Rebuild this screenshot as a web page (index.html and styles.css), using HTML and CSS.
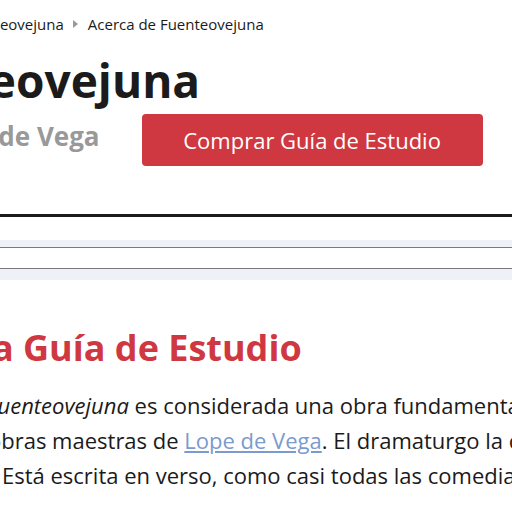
FILE: index.html
```html
<!DOCTYPE html>
<html lang="es">
<head>
<meta charset="utf-8">
<title>Acerca de Fuenteovejuna</title>
<link rel="stylesheet" href="styles.css">
</head>
<body>
<div class="page">
  <nav class="crumbs">
    <span class="crumb first">Fuenteovejuna</span>
    <span class="sep"></span>
    <span class="crumb">Acerca de Fuenteovejuna</span>
  </nav>
  <header class="hero">
    <h1 class="title">Fuenteovejuna</h1>
    <div class="hero-row">
      <p class="author">Lope de Vega</p>
      <a class="buy" href="#">Comprar Guía de Estudio</a>
    </div>
  </header>
  <hr class="rule">
  <div class="tabs">
    <div class="tab-band"></div>
    <div class="tab-bar"></div>
    <div class="tab-band low"></div>
  </div>
  <section class="content">
    <h2 class="heading">Acerca de la Guía de Estudio</h2>
    <p class="text">
      <span class="line l1"><em>Fuenteovejuna</em> es considerada una obra fundamental del teatro</span>
      <span class="line l2">obras maestras de <a href="#">Lope de Vega</a>. El dramaturgo la compuso</span>
      <span class="line l3">Está escrita en verso, como casi todas las comedias del Siglo de Oro.</span>
    </p>
  </section>
</div>
</body>
</html>
```
FILE: styles.css
```css
html, body {
  margin: 0;
  padding: 0;
  background: #fff;
  overflow: hidden;
}
body {
  font-family: "Open Sans", "Noto Sans", sans-serif;
  color: #1b1b1b;
  width: 512px;
  height: 512px;
}
.page {
  width: 512px;
  overflow: hidden;
}
.crumbs {
  display: flex;
  align-items: center;
  height: 48px;
  font-size: 15px;
  white-space: nowrap;
  color: #1b1b1b;
}
.crumb.first {
  margin-left: -40px;
}
.sep {
  width: 0;
  height: 0;
  border-top: 4px solid transparent;
  border-bottom: 4px solid transparent;
  border-left: 5px solid #9a9a9a;
  margin: 0 10px 0 9px;
}
.hero {
  padding-top: 7px;
}
.title {
  margin: 0 0 0 -144px;
  font-size: 46px;
  font-weight: 700;
  line-height: 50px;
  white-space: nowrap;
}
.hero-row {
  display: flex;
  align-items: center;
  gap: 42px;
  margin-top: 9px;
}
.author {
  margin: 0 0 8px -71px;
  font-size: 26px;
  font-weight: 700;
  color: #999;
  white-space: nowrap;
}
.buy {
  display: flex;
  align-items: center;
  justify-content: center;
  width: 341px;
  height: 52px;
  flex: none;
  background: #cf3840;
  color: #fff;
  border-radius: 4px;
  font-size: 22px;
  text-decoration: none;
}
.rule {
  margin: 48px 0 0;
  border: 0;
  height: 3px;
  background: #1c1c1c;
}
.tabs {
  margin-top: 23px;
}
.tab-band {
  height: 7px;
  background: #eef2f8;
}
.tab-bar {
  height: 20px;
  border-top: 1px solid #7a7a7a;
  border-bottom: 1px solid #7a7a7a;
}
.tab-band.low {
  height: 11px;
}
.content {
  padding-top: 48px;
}
.heading {
  margin: 0 0 0 -203px;
  font-size: 36px;
  font-weight: 700;
  color: #cf3840;
  white-space: nowrap;
  line-height: 40px;
}
.text {
  margin: 20px 0 0;
  font-size: 22px;
  line-height: 35px;
  white-space: nowrap;
}
.line {
  display: block;
}
.l1 { margin-left: -13px; }
.l2 { margin-left: -12px; }
.l3 { margin-left: 2px; }
.text a {
  color: #7b9ad0;
  text-decoration: underline;
}
```
